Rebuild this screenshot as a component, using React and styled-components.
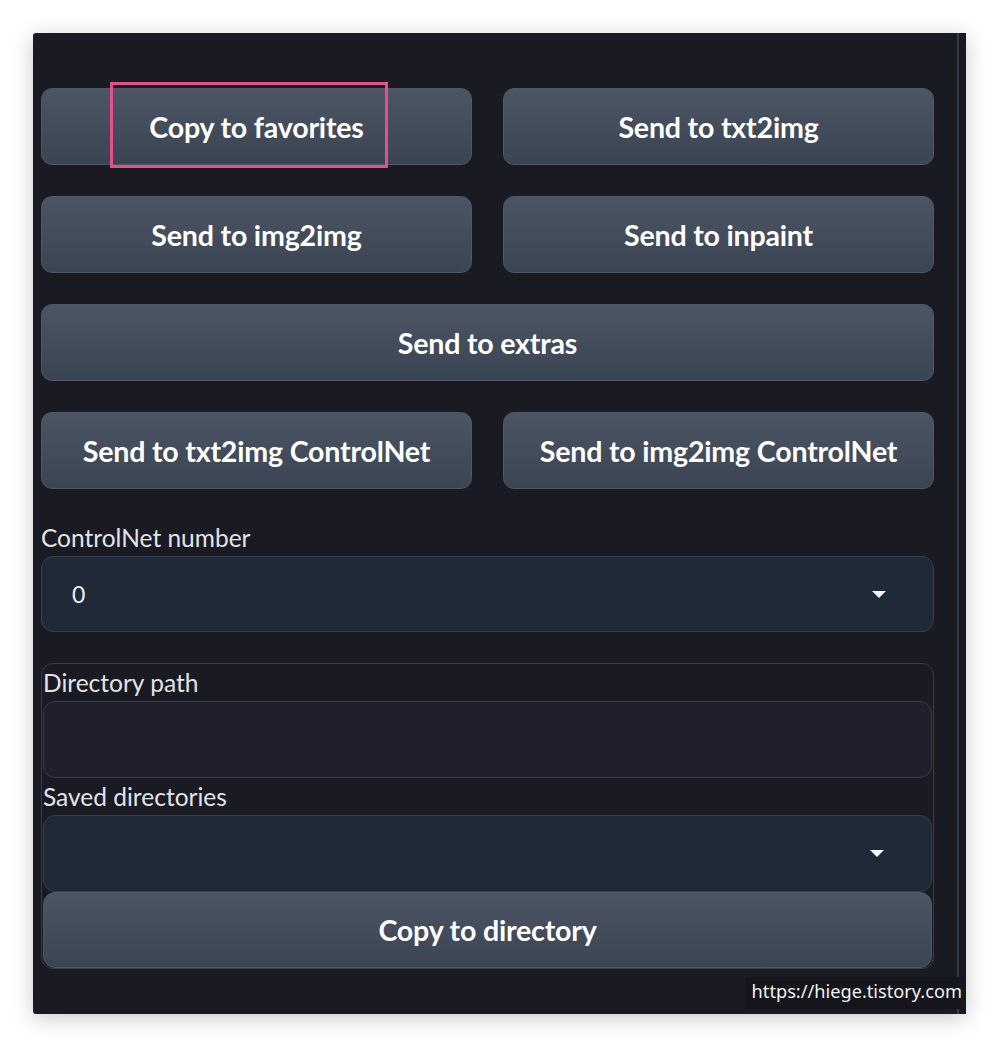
import React from 'react';
import styled, { createGlobalStyle } from 'styled-components';

const GlobalStyle = createGlobalStyle`
  html, body {
    margin: 0;
    padding: 0;
    background: #ffffff;
  }
  body {
    font-family: Lato, "Noto Sans", "Liberation Sans", sans-serif;
  }
`;

const Page = styled.div`
  width: 1000px;
  height: 1048px;
  padding: 33px 0 0 33px;
  box-sizing: border-box;
`;

const Panel = styled.div`
  position: relative;
  width: 933px;
  height: 981px;
  background: #1a1a23;
  border-radius: 3px;
  box-shadow: 0 4px 22px rgba(0, 0, 0, 0.22);
  display: flex;
  box-sizing: border-box;
  padding-left: 8px;
`;

const Content = styled.div`
  width: 893px;
  padding-top: 55px;
  display: flex;
  flex-direction: column;
`;

const ScrollTrack = styled.div`
  margin-left: 23px;
  width: 7px;
  border-left: 2px solid #343b48;
  background: #17171f;
`;

const ButtonGrid = styled.div`
  display: grid;
  grid-template-columns: 1fr 1fr;
  gap: 31px;
`;

const Button = styled.button`
  position: relative;
  grid-column: ${({ $wide }) => ($wide ? '1 / -1' : 'auto')};
  height: ${({ $h }) => $h || 77}px;
  border: 1px solid #4e5867;
  border-radius: ${({ $radius }) => $radius || 11}px;
  background: linear-gradient(to bottom, #4b5563, #3b4453);
  color: #ffffff;
  font-family: Lato, "Noto Sans", sans-serif;
  font-weight: 700;
  font-size: 28.6px;
  letter-spacing: -0.2px;
  display: flex;
  align-items: center;
  justify-content: center;
  padding: 0;
  box-sizing: border-box;
`;

const Highlight = styled.div`
  position: absolute;
  left: 68px;
  top: -7px;
  width: 278px;
  height: 86px;
  border: 3px solid #e4508a;
  box-sizing: border-box;
  pointer-events: none;
`;

const Label = styled.div`
  font-family: Lato, "Noto Sans", sans-serif;
  font-size: 24.5px;
  color: #e2e4e9;
  line-height: ${({ $h }) => $h || 36}px;
  height: ${({ $h }) => $h || 36}px;
`;

const Select = styled.div`
  height: ${({ $h }) => $h || 76}px;
  background: #1f2937;
  border: 1px solid #353f4f;
  border-radius: 12px;
  display: flex;
  align-items: center;
  justify-content: space-between;
  padding: 0 47px 0 30px;
  box-sizing: border-box;
  color: #eef0f3;
  font-family: Lato, "Noto Sans", sans-serif;
  font-size: 23px;
`;

const Caret = styled.span`
  width: 0;
  height: 0;
  border-left: 7px solid transparent;
  border-right: 7px solid transparent;
  border-top: 7px solid #f4f5f7;
  margin-left: auto;
`;

const Field = styled.div`
  height: 77px;
  background: #1f1f2d;
  border: 1px solid #353d4b;
  border-radius: 12px;
  box-sizing: border-box;
`;

const Group = styled.div`
  margin-top: 31px;
  border: 1px solid #353d4b;
  border-radius: 12px;
  padding: 1px 1px 0 1px;
  display: flex;
  flex-direction: column;
`;

const Watermark = styled.div`
  position: absolute;
  right: 4px;
  bottom: 5px;
  padding: 2px 0 6px 6px;
  background: #15151c;
  color: #f2f2f2;
  font-family: "Noto Sans", Lato, sans-serif;
  font-size: 18.2px;
`;

export default function App() {
  return (
    <>
      <GlobalStyle />
      <Page>
        <Panel>
          <Content>
            <ButtonGrid>
              <Button>
                Copy to favorites
                <Highlight />
              </Button>
              <Button>Send to txt2img</Button>
              <Button>Send to img2img</Button>
              <Button>Send to inpaint</Button>
              <Button $wide>Send to extras</Button>
              <Button>Send to txt2img ControlNet</Button>
              <Button>Send to img2img ControlNet</Button>
            </ButtonGrid>
            <Label style={{ marginTop: 31 }}>ControlNet number</Label>
            <Select>
              <span>0</span>
              <Caret />
            </Select>
            <Group>
              <Label>Directory path</Label>
              <Field />
              <Label $h={37}>Saved directories</Label>
              <Select $h={77}>
                <Caret />
              </Select>
              <Button $h={76} $radius={12}>Copy to directory</Button>
            </Group>
          </Content>
          <ScrollTrack />
          <Watermark>https://hiege.tistory.com</Watermark>
        </Panel>
      </Page>
    </>
  );
}
